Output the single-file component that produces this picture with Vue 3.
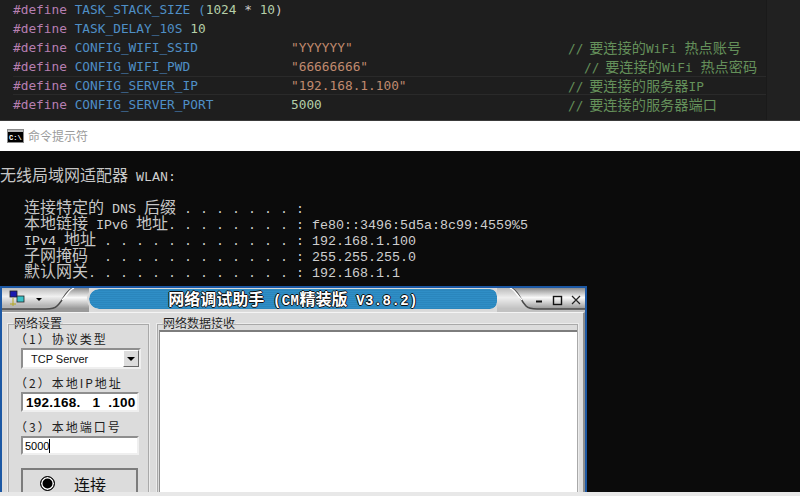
<script setup>
const runs = (text) =>
  text
    .split(/([\u3000-\u9fff\uff00-\uffef]+)/)
    .filter(Boolean)
    .map((t) => ({ t, cjk: /[\u3000-\u9fff\uff00-\uffef]/.test(t) }))

const configRows = [
  { name: 'CONFIG_WIFI_SSID', value: '"YYYYYY"', kind: 'str', note: '// 要连接的WiFi 热点账号' },
  { name: 'CONFIG_WIFI_PWD', value: '"66666666"', kind: 'str', note: '// 要连接的WiFi 热点密码', shift: true },
  { name: 'CONFIG_SERVER_IP', value: '"192.168.1.100"', kind: 'str', note: '// 要连接的服务器IP', active: true },
  { name: 'CONFIG_SERVER_PORT', value: '5000', kind: 'num', note: '// 要连接的服务器端口' }
]

const consoleLines = [
  '无线局域网适配器 WLAN:',
  ' ',
  '   连接特定的 DNS 后缀 . . . . . . . :',
  '   本地链接 IPv6 地址. . . . . . . . : fe80::3496:5d5a:8c99:4559%5',
  '   IPv4 地址 . . . . . . . . . . . . : 192.168.1.100',
  '   子网掩码  . . . . . . . . . . . . : 255.255.255.0',
  '   默认网关. . . . . . . . . . . . . : 192.168.1.1'
]

const ipText = '192.168.   1  .100'
</script>

<template>
  <div class="page">
    <section class="editor">
      <div class="code">
        <div class="line">
          <span class="kw">#define</span> <span class="mac">TASK_STACK_SIZE</span> <span class="mac">(</span><span class="num">1024</span> <span class="op">*</span> <span class="num">10</span><span class="op">)</span>
        </div>
        <div class="line">
          <span class="kw">#define</span> <span class="mac">TASK_DELAY_10S</span> <span class="num">10</span>
        </div>
        <div
          v-for="row in configRows"
          :key="row.name"
          class="line cols"
          :class="{ active: row.active }"
        >
          <span><span class="kw">#define</span> <span class="mac">{{ row.name }}</span></span>
          <span :class="row.kind">{{ row.value }}</span>
          <span class="cmt" :class="{ shift: row.shift }"><span
            v-for="(s, i) in runs(row.note)"
            :key="i"
            :class="{ cjk: s.cjk }"
          >{{ s.t }}</span></span>
        </div>
      </div>
      <div class="minimap"></div>
    </section>

    <header class="cmdbar">
      <svg class="cmdicon" width="17" height="14" viewBox="0 0 17 14">
        <rect x="0.5" y="0.5" width="16" height="13" fill="#000" stroke="#8a8a8a" />
        <rect x="1" y="1" width="15" height="2" fill="#b9b9b9" />
        <text x="2" y="10.5" font-size="7" font-weight="700" fill="#fff" font-family="Liberation Mono">C:\</text>
      </svg>
      <span class="cmdtitle">命令提示符</span>
    </header>

    <main class="console">
      <pre class="output"><div v-for="(l, i) in consoleLines" :key="i" class="cline"><span
        v-for="(s, j) in runs(l)"
        :key="j"
        :class="{ cjk: s.cjk }"
      >{{ s.t }}</span></div></pre>

      <div class="window">
        <div class="titlebar">
          <svg class="cap" width="87" height="24" viewBox="0 0 87 24">
            <defs>
              <linearGradient id="capL" x1="0" y1="0" x2="0" y2="1">
                <stop offset="0" stop-color="#bdbdbd" />
                <stop offset="0.4" stop-color="#f0f0f0" />
                <stop offset="0.85" stop-color="#b4b4b4" />
              </linearGradient>
              <linearGradient id="capO" x1="0" y1="0" x2="0" y2="1">
                <stop offset="0" stop-color="#8c8c8c" />
                <stop offset="0.4" stop-color="#fafafa" />
                <stop offset="0.85" stop-color="#9a9a9a" />
              </linearGradient>
            </defs>
            <rect width="87" height="24" fill="url(#capO)" />
            <path d="M0 0H70C63 3 62 12 55 18C52 21 48 21 44 21H0Z" fill="url(#capL)" />
            <path d="M71 0C63 3 62 12 55 18C52 21 48 21 44 21H0" fill="none" stroke="#4a4a4a" stroke-width="1.6" />
            <path d="M72 0C66 2 65 8 60 12" fill="none" stroke="#fff" stroke-width="1.4" />
            <rect x="8" y="3" width="7" height="6" fill="#1a1ab0" stroke="#222" stroke-width="0.8" />
            <rect x="15" y="8" width="7" height="6" fill="#39c2c8" stroke="#222" stroke-width="0.8" />
            <path d="M8 16H14M11 10V18" stroke="#b5a820" stroke-width="1" fill="none" />
            <path d="M34 10H40L37 13Z" fill="#000" />
          </svg>
          <div class="pill">
            <span class="wintitle"><span
              v-for="(s, i) in runs('网络调试助手 (CM精装版 V3.8.2)')"
              :key="i"
              :class="s.cjk ? 'tc' : 'tl'"
            >{{ s.t }}</span></span>
          </div>
          <svg class="cap" width="88" height="24" viewBox="0 0 88 24">
            <rect width="88" height="24" fill="url(#capO)" />
            <path d="M0 0H14C22 3 23 12 29 18C32 21 36 21 40 21H88V24H0Z" fill="#e4e4e4" opacity="0.55" />
            <path d="M14 0C22 3 23 12 29 18C32 21 36 21 40 21H88" fill="none" stroke="#4a4a4a" stroke-width="1.6" />
            <path d="M13 0C19 2 20 8 25 12" fill="none" stroke="#fff" stroke-width="1.4" />
            <rect x="39" y="12.5" width="6" height="2" fill="#111" />
            <rect x="56.5" y="8.5" width="8" height="8" fill="none" stroke="#111" stroke-width="1.4" />
            <path d="M75 8L83 16M83 8L75 16" stroke="#222" stroke-width="1.2" />
          </svg>
        </div>

        <div class="winbody">
          <div class="group settings">
            <div class="legend">网络设置</div>
            <div class="label">（1）协议类型</div>
            <div class="select">
              <span>TCP Server</span>
              <span class="arrowbtn"><i class="tri"></i></span>
            </div>
            <div class="label second">（2）本地IP地址</div>
            <div class="field ip">{{ ipText }}</div>
            <div class="label third">（3）本地端口号</div>
            <div class="field port"><span>5000</span><i class="caret"></i></div>
            <div class="connect">
              <i class="radio"></i>
              <span class="connect-text">连接</span>
            </div>
          </div>
          <div class="group receive">
            <div class="legend">网络数据接收</div>
            <div class="textarea"></div>
          </div>
        </div>
      </div>
    </main>

    <div class="strip"></div>
  </div>
</template>

<style scoped>
.page {
  width: 800px;
  height: 496px;
  display: flex;
  flex-direction: column;
  overflow: hidden;
  background: #000;
}

/* editor */
.editor {
  height: 121px;
  flex: none;
  display: flex;
  background: #1e1e1e;
  border-bottom: 1px solid #3a3a3a;
  box-sizing: border-box;
}
.code {
  width: 766px;
  padding-left: 13px;
  box-sizing: border-box;
  font: 12.8px/19px "DejaVu Sans Mono", "Noto Sans CJK SC", monospace;
  white-space: pre;
  color: #d4d4d4;
}
.line {
  height: 19px;
}
.cols {
  display: grid;
  grid-template-columns: 278px 277px 1fr;
}
.active {
  box-shadow: inset 0 1px 0 #2a2a2a, inset 0 -1px 0 #2a2a2a;
}
.kw { color: #b77fb1; }
.mac { color: #4f8fc6; }
.num { color: #b5cea8; }
.op { color: #c9c9c9; }
.str { color: #c08a6e; }
.cmt { color: #64905a; }
.cmt.shift { padding-left: 16px; }
.cmt .cjk {
  display: inline-block;
  height: 19px;
  font-size: 14.2px;
  font-family: "Noto Sans CJK SC", sans-serif;
}
.cmt .cjk:nth-child(2) {
  margin-left: -2px;
}
.minimap {
  flex: 1;
  background: #212121;
  border-left: 1px solid #1a1a1a;
}

/* command prompt title */
.cmdbar {
  height: 30px;
  flex: none;
  display: flex;
  align-items: center;
  gap: 4px;
  padding-left: 7px;
  background: #fff;
}
.cmdicon { display: block; }
.cmdtitle {
  font: 12px/16px "Noto Sans CJK SC", sans-serif;
  color: #9a9a9a;
}

/* console */
.console {
  position: relative;
  flex: 1;
  min-height: 0;
  background: #0b0b0b;
  overflow: hidden;
}
.output {
  margin: 0;
  padding-top: 15px;
  color: #cfcfcf;
  font: 13.33px/16px "Liberation Mono", monospace;
}
.cline {
  height: 16px;
  white-space: pre;
}
.output .cjk {
  display: inline-block;
  height: 16px;
  line-height: 16px;
  font-size: 16px;
  font-family: "Noto Sans CJK SC", sans-serif;
  color: #c6c6c6;
}

/* dialog window */
.window {
  position: absolute;
  left: 0;
  top: 135px;
  width: 587px;
  height: 206px;
  box-sizing: border-box;
  border: 2px solid #1c58a4;
  border-bottom: 0;
  background: #dcdcdc;
  overflow: hidden;
}
.titlebar {
  display: flex;
  height: 24px;
}
.cap {
  flex: none;
  display: block;
}
.pill {
  flex: 1;
  height: 20px;
  display: flex;
  align-items: center;
  justify-content: center;
  border-radius: 10px 7px 7px 10px;
  background: repeating-linear-gradient(180deg, #2f8ec6 0 1px, #2a86bd 1px 2px);
  margin-top: 1px;
  outline: 2px solid #d9d9d9;
}
.wintitle {
  color: #fff;
  white-space: pre;
  font-weight: 700;
  text-shadow: 1px 0 0 #111, -1px 0 0 #111, 0 1px 0 #111, 0 -1px 0 #111;
}
.tc {
  font: 700 16px/20px "Noto Sans CJK SC", sans-serif;
}
.tl {
  font: 700 14px/20px "Liberation Mono", monospace;
  letter-spacing: 0.4px;
}

.winbody {
  display: flex;
  gap: 6px;
  padding: 10px 4px 0 5px;
  border-top: 1px solid #f4f4f4;
  border-right: 2px solid #8d8d8d;
  height: 180px;
  box-sizing: border-box;
}
.group {
  box-sizing: border-box;
  border: 2px solid #ececec;
  outline: 1px solid #a9a9a9;
  outline-offset: -2px;
  height: 240px;
  flex: none;
  font-family: "Noto Sans CJK SC", sans-serif;
  color: #222;
}
.settings {
  width: 143px;
}
.receive {
  flex: 1;
}
.legend {
  display: block;
  width: max-content;
  margin: -9px 0 0 4px;
  padding: 0 1px;
  height: 14px;
  font-size: 12px;
  line-height: 14px;
  background: #dcdcdc;
}
.label {
  height: 18px;
  margin-left: 6px;
  font-size: 12px;
  line-height: 18px;
  letter-spacing: 2px;
  white-space: pre;
}
.label.second { margin-top: 5px; }
.label.third { margin-top: 6px; }

.select {
  margin-left: 12px;
  width: 120px;
  height: 21px;
  box-sizing: border-box;
  border: 2px solid #8e8e8e;
  border-right-color: #efefef;
  border-bottom-color: #efefef;
  background: #fff;
  display: flex;
  align-items: center;
  justify-content: space-between;
  padding-left: 8px;
  font: 11px "Liberation Sans", sans-serif;
  color: #111;
}
.arrowbtn {
  width: 16px;
  height: 17px;
  background: #dcdcdc;
  border: 1px solid;
  border-color: #fff #666 #666 #fff;
  box-sizing: border-box;
  display: flex;
  align-items: center;
  justify-content: center;
}
.tri {
  width: 0;
  height: 0;
  border: 4px solid transparent;
  border-top: 4px solid #000;
  border-bottom: 0;
}
.field {
  margin-left: 12px;
  width: 118px;
  box-sizing: border-box;
  border: 2px solid #8e8e8e;
  border-right-color: #efefef;
  border-bottom-color: #efefef;
  background: #fff;
  color: #000;
  display: flex;
  align-items: center;
}
.ip {
  height: 20px;
  padding-left: 3px;
  font: 700 13.5px "Liberation Sans", sans-serif;
  letter-spacing: 0.25px;
  white-space: pre;
}
.port {
  height: 19px;
  padding-left: 2px;
  font: 11px "Liberation Sans", sans-serif;
}
.caret {
  width: 1px;
  height: 14px;
  background: #000;
}
.connect {
  margin: 13px 0 0 12px;
  width: 117px;
  height: 40px;
  box-sizing: border-box;
  border: 2px solid #7c7c7c;
  display: flex;
  align-items: flex-start;
  padding: 5px 0 0 17px;
  gap: 19px;
  color: #111;
}
.connect-text {
  font-size: 16px;
  line-height: 18px;
  height: 18px;
}
.radio {
  width: 15px;
  height: 15px;
  margin-top: 1px;
  box-sizing: border-box;
  border-radius: 50%;
  background: #000;
  border: 1px solid #000;
  box-shadow: inset 0 0 0 1.5px #fff;
}
.textarea {
  margin-left: 1px;
  height: 220px;
  background: #fff;
  border-top: 2px solid #7d7d7d;
  border-left: 1px solid #8e8e8e;
}

.strip {
  height: 4px;
  flex: none;
  background: #e8e8e8;
}
</style>
